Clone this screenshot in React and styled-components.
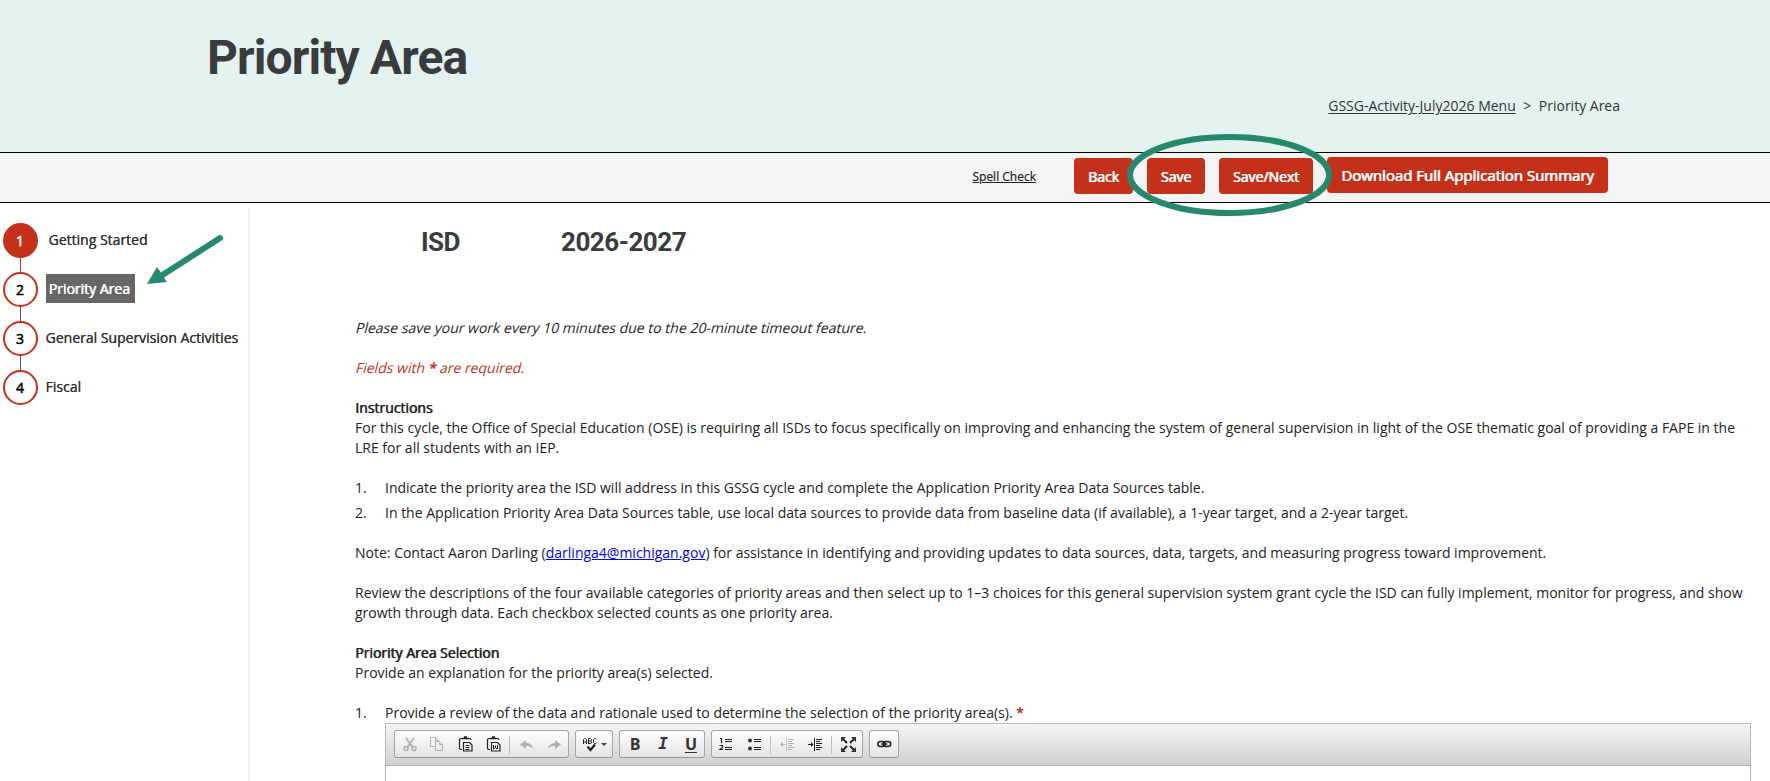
import React from 'react';
import styled, { createGlobalStyle } from 'styled-components';

//Styles
const GlobalStyle = createGlobalStyle`
  * {
    box-sizing: border-box;
  }
  body {
    margin: 0;
    background: #fff;
    color: #222;
    font-family: 'Open Sans', sans-serif;
    font-size: 14px;
    line-height: 20px;
  }
`;

const Page = styled.div`
  position: relative;
  height: 781px;
  overflow: hidden;
`;

const Header = styled.header`
  height: 152px;
  padding: 28px 150px 0 207px;
  background: #e4f3f0;
`;

const Title = styled.h1`
  margin: 0;
  height: 68px;
  color: #3a3b3d;
  font-family: Roboto, sans-serif;
  font-size: 48px;
  font-weight: 700;
  line-height: 60px;
  letter-spacing: -0.9px;
`;

const Breadcrumb = styled.nav`
  display: flex;
  justify-content: flex-end;
  gap: 7.5px;
  color: #333;
`;

const BreadcrumbLink = styled.a`
  text-decoration: underline;
  text-underline-offset: 2px;
`;

const ActionBar = styled.div`
  display: flex;
  align-items: flex-start;
  justify-content: flex-end;
  gap: 14px;
  height: 51px;
  padding: 5px 162px 0 0;
  background: #f4f4f4;
  border-top: 1px solid #000;
  border-bottom: 1px solid #000;
`;

const SpellCheck = styled.a`
  margin: 9px 24px 0 0;
  font-size: 12px;
  text-decoration: underline;
  -webkit-text-stroke: 0.2px;
`;

const Button = styled.button`
  width: ${({ $width }) => $width}px;
  height: 36px;
  margin: ${({ $large }) => ($large ? '-1px 0 0' : '0')};
  padding: 0;
  border: 0;
  border-radius: 4px;
  background: #c4311b;
  color: #fff;
  font-family: inherit;
  font-size: ${({ $large }) => ($large ? 15 : 14)}px;
  line-height: 37px;
  white-space: nowrap;
  text-shadow: 0.7px 0 currentColor;
  -webkit-text-stroke: 0.2px;
`;

const Body = styled.div`
  display: flex;
  padding-top: 6px;
`;

const Sidebar = styled.ol`
  display: flex;
  flex-direction: column;
  width: 250px;
  height: 580px;
  margin: 0;
  padding: 14px 0 0 3px;
  border-right: 2px solid #f1f1f1;
  list-style: none;
`;

const Step = styled.li`
  display: grid;
  grid-template-columns: 35px 1fr;
  grid-template-rows: 35px 14px;
  column-gap: 8px;
`;

const StepNumber = styled.span`
  height: 35px;
  padding-right: 1px;
  border: 2px solid #c4311b;
  border-radius: 50%;
  background: ${({ $filled }) => ($filled ? '#c4311b' : '#fff')};
  color: ${({ $filled }) => ($filled ? '#fff' : '#000')};
  line-height: 31px;
  text-align: center;
  -webkit-text-stroke: 0.5px;
`;

const StepLabel = styled.span`
  justify-self: start;
  height: 29px;
  margin-top: 2px;
  padding: 0 ${({ $current }) => ($current ? '5px' : '0')} 0
    ${({ $inset }) => ($inset ? '3px' : '0')};
  background: ${({ $current }) => ($current ? '#666' : 'transparent')};
  color: ${({ $current }) => ($current ? '#fff' : '#333')};
  line-height: 30px;
  text-indent: -0.5px;
  white-space: nowrap;
  text-shadow: ${({ $current }) => ($current ? '0.7px' : '0.3px')} 0 currentColor;
`;

const StepLine = styled.span`
  justify-self: center;
  width: 1px;
  height: 14px;
  background: ${({ $done }) => ($done ? '#c4311b' : '#555')};
`;

const Content = styled.main`
  flex: 1;
  padding: 16px 19px 0 105px;
`;

const Applicant = styled.h2`
  display: flex;
  gap: 101px;
  margin: 0 0 59px 66px;
  color: #3a3b3d;
  font-family: Roboto, sans-serif;
  font-size: 26px;
  font-weight: 700;
  line-height: 34px;
  letter-spacing: -0.5px;
`;

const Paragraph = styled.p`
  margin: 0 0 20px;
`;

//Slanted upright face, wider than the true italic
const Slanted = styled(Paragraph)`
  color: ${({ $red }) => ($red ? '#c4311b' : 'inherit')};
  transform: skewX(-14deg);
  transform-origin: 0 75%;
`;

const Strong = styled.span`
  display: block;
  text-shadow: 0.7px 0 currentColor;
`;

const Required = styled.b`
  color: #c4311b;
`;

const MailLink = styled.a`
  color: #0000ee;
  text-decoration: underline;
`;

const List = styled.ol`
  display: flex;
  flex-direction: column;
  gap: 5px;
  margin: 0 0 20px;
  padding: 0;
  list-style: none;
`;

const Item = styled.li`
  display: grid;
  grid-template-columns: 30px 1fr;
`;

const Editor = styled.div`
  height: 120px;
  margin-left: 30px;
  border: 1px solid #b6b6b6;
`;

const Toolbar = styled.div`
  display: flex;
  gap: 6px;
  height: 42px;
  padding: 6px 8px;
  background: linear-gradient(#f5f5f5, #cfd1cf);
  border-bottom: 1px solid #b6b6b6;
  box-shadow: inset 0 1px 0 #fff;
`;

const Group = styled.div`
  display: flex;
  height: 28px;
  border: 1px solid #a6a6a6;
  border-bottom-color: #979797;
  border-radius: 3px;
  background: linear-gradient(#fff, #e4e4e4);
`;

const Tool = styled.span`
  display: flex;
  align-items: center;
  padding: 0 5px 0 7px;
  opacity: ${({ $disabled }) => ($disabled ? 0.3 : 1)};
`;

const Separator = styled.span`
  width: 1px;
  height: 18px;
  margin: 5px 2px 0;
  background: #c0c0c0;
`;

const Caret = styled.span`
  width: 0;
  height: 0;
  margin: 12px 5px 0 -3px;
  border: 3px solid transparent;
  border-top: 3px solid #474747;
  border-bottom: 0;
`;

const Glyph = styled.svg`
  display: block;
  width: 16px;
  height: 16px;
  overflow: visible;
  fill: none;
  stroke: #222;
`;

const Letter = styled.span`
  width: 16px;
  color: #333;
  font: ${({ $italic }) => ($italic ? 'italic' : 'normal')} bold 16px/16px
    ${({ $italic }) => ($italic ? "'DejaVu Sans Mono', monospace" : "'Open Sans', sans-serif")};
  text-align: center;
  text-decoration: ${({ $underline }) => ($underline ? 'underline' : 'none')};
  text-decoration-thickness: 1px;
  text-underline-offset: 2px;
`;

const Annotations = styled.svg`
  position: absolute;
  top: 0;
  left: 0;
  width: 1770px;
  height: 781px;
  pointer-events: none;
`;

//Toolbar icons
const clipboard = (
  <>
    <path
      d="M4 13.5H3A1.5 1.5 0 0 1 1.5 12V4A1.5 1.5 0 0 1 3 2.5h1.5M10.500 2.5h1A1.5 1.5 0 0 1 13 4"
      strokeWidth="1.2"
    />
    <path d="M4 2.500h7M6 1h3" strokeWidth="1.5" />
    <path d="M5.500 6.500h6l2.500 2.500v6H5.500z" strokeWidth="1.2" />
  </>
);

const icons = {
  cut: (
    <>
      <path d="M4 2 10.5 11M12 2 5.5 11" strokeWidth="2" />
      <circle cx="4" cy="12.5" r="2" strokeWidth="1.5" />
      <circle cx="12" cy="12.5" r="2" strokeWidth="1.5" />
    </>
  ),
  copy: (
    <path d="M4.500 10.500h-4v-9h5l3 3v1M5.500 1.500v3h3M5.500 5.500h4l3 3v6h-7zM9.500 5.500v3h3" />
  ),
  paste: (
    <>
      {clipboard}
      <path d="M7.500 9.500h4M7.500 11.500h4M7.500 13.500h4" />
    </>
  ),
  pasteWord: (
    <>
      {clipboard}
      <path d="M7.500 9v4l2-1.500 2 1.500V9M9.500 9.500v2" />
    </>
  ),
  undo: (
    <path d="M1 8.500 7 4v3c4 0 6 2 7.500 6C12 10.500 10 10 7 10v3z" fill="#222" stroke="none" />
  ),
  redo: (
    <path d="M14 8.500 8 4v3c-4 0-6 2-7.500 6C3 10.500 5 10 8 10v3z" fill="#222" stroke="none" />
  ),
  spell: (
    <>
      <path d="M.5 8V3.500l1-1h1l1 1V8M.5 6h3M5.500 8V2.500h2l1 1v1l-1 .5h-2M7.500 5l1 1v1l-1 .5h-2M13.500 3.500l-1-1h-1l-1 1v3l1 1h1l1-1" />
      <path d="m4.500 10.500 3 3.500L12 8.500" strokeWidth="2.2" />
    </>
  ),
  numbered: (
    <>
      <path d="M6 3.500h7M6 5.500h7M6 11.500h7M6 13.500h7" />
      <path d="M1 2.500h1.500V7M.5 9.500h3v2l-2.500 2h3" strokeWidth="1.2" />
    </>
  ),
  bullets: (
    <>
      <circle cx="3" cy="4.5" r="2" fill="#333" stroke="none" />
      <circle cx="3" cy="12.5" r="2" fill="#333" stroke="none" />
      <path d="M7 3.500h7M7 5.500h7M7 11.500h7M7 13.500h7" />
    </>
  ),
  outdent: (
    <>
      <path d="M6.500 2v13" strokeDasharray="1.5 0.5" />
      <path d="M8 3.500h6M8 5.500h4M8 7.500h6M8 9.500h4M8 11.500h6M8 13.500h4M1 8.500h4" />
      <path d="M3 6v5L0 8.500z" fill="#222" stroke="none" />
    </>
  ),
  indent: (
    <>
      <path d="M6.500 2v13" />
      <path d="M8 3.500h6M8 5.500h4M8 7.500h6M8 9.500h4M8 11.500h6M8 13.500h4M0 8.500h4" />
      <path d="M3 6v5l2.500-2.500z" fill="#222" stroke="none" />
    </>
  ),
  maximize: (
    <>
      <path d="M2 3l4 4M13 3l-4 4M2 14l4-4M13 14l-4-4" strokeWidth="2" />
      <path d="M0 1h5L0 6zM15 1h-5l5 5zM0 16h5l-5-5zM15 16h-5l5-5z" fill="#333" stroke="none" />
    </>
  ),
  link: (
    <>
      <rect x=".8" y="5.5" width="7.5" height="5" rx="2.5" strokeWidth="1.5" />
      <rect x="6.2" y="5.5" width="7.5" height="5" rx="2.5" strokeWidth="1.5" />
      <path d="M4 8h6.500" strokeWidth="1.3" />
    </>
  ),
};

const steps = [
  { id: 1, label: 'Getting Started', filled: true, inset: true },
  { id: 2, label: 'Priority Area', current: true, inset: true },
  { id: 3, label: 'General Supervision Activities' },
  { id: 4, label: 'Fiscal' },
];

//Components
function Icon({ name, disabled }) {
  return (
    <Tool $disabled={disabled}>
      <Glyph viewBox="0 0 16 16">{icons[name]}</Glyph>
    </Tool>
  );
}

function EditorToolbar() {
  return (
    <Toolbar>
      <Group>
        <Icon name="cut" disabled />
        <Icon name="copy" disabled />
        <Icon name="paste" />
        <Icon name="pasteWord" />
        <Separator />
        <Icon name="undo" disabled />
        <Icon name="redo" disabled />
      </Group>
      <Group>
        <Icon name="spell" />
        <Caret />
      </Group>
      <Group>
        <Tool>
          <Letter>B</Letter>
        </Tool>
        <Tool>
          <Letter $italic>I</Letter>
        </Tool>
        <Tool>
          <Letter $underline>U</Letter>
        </Tool>
      </Group>
      <Group>
        <Icon name="numbered" />
        <Icon name="bullets" />
        <Separator />
        <Icon name="outdent" disabled />
        <Icon name="indent" />
        <Separator />
        <Icon name="maximize" />
      </Group>
      <Group>
        <Icon name="link" />
      </Group>
    </Toolbar>
  );
}

function StepList() {
  return (
    <Sidebar>
      {steps.map(({ id, label, filled, current, inset }) => (
        <Step key={id}>
          <StepNumber $filled={filled}>{id}</StepNumber>
          <StepLabel $current={current} $inset={inset}>
            {label}
          </StepLabel>
          {id < steps.length && <StepLine $done={filled} />}
        </Step>
      ))}
    </Sidebar>
  );
}

export default function App() {
  return (
    <Page>
      <GlobalStyle />
      <Header>
        <Title>Priority Area</Title>
        <Breadcrumb>
          <BreadcrumbLink>GSSG-Activity-July2026 Menu</BreadcrumbLink>
          <span>&gt;</span>
          <span>Priority Area</span>
        </Breadcrumb>
      </Header>
      <ActionBar>
        <SpellCheck>Spell Check</SpellCheck>
        <Button $width={59}>Back</Button>
        <Button $width={58}>Save</Button>
        <Button $width={94}>Save/Next</Button>
        <Button $width={281} $large>
          Download Full Application Summary
        </Button>
      </ActionBar>
      <Body>
        <StepList />
        <Content>
          <Applicant>
            <span>ISD</span>
            <span>2026-2027</span>
          </Applicant>
          <Slanted>
            Please save your work every 10 minutes due to the 20-minute timeout feature.
          </Slanted>
          <Slanted $red>
            Fields with <Required>*</Required> are required.
          </Slanted>
          <Paragraph>
            <Strong>Instructions</Strong>
            For this cycle, the Office of Special Education (OSE) is requiring all ISDs to focus
            specifically on improving and enhancing the system of general supervision in light of
            the OSE thematic goal of providing a FAPE in the LRE for all students with an IEP.
          </Paragraph>
          <List>
            <Item>
              <span>1.</span>
              <span>
                Indicate the priority area the ISD will address in this GSSG cycle and complete the
                Application Priority Area Data Sources table.
              </span>
            </Item>
            <Item>
              <span>2.</span>
              <span>
                In the Application Priority Area Data Sources table, use local data sources to
                provide data from baseline data (if available), a 1-year target, and a 2-year
                target.
              </span>
            </Item>
          </List>
          <Paragraph>
            Note: Contact Aaron Darling (<MailLink>darlinga4@michigan.gov</MailLink>) for assistance
            in identifying and providing updates to data sources, data, targets, and measuring
            progress toward improvement.
          </Paragraph>
          <Paragraph>
            Review the descriptions of the four available categories of priority areas and then
            select up to 1–3 choices for this general supervision system grant cycle the ISD can
            fully implement, monitor for progress, and show growth through data. Each checkbox
            selected counts as one priority area.
          </Paragraph>
          <Paragraph>
            <Strong>Priority Area Selection</Strong>
            Provide an explanation for the priority area(s) selected.
          </Paragraph>
          <Item as="div">
            <span>1.</span>
            <span>
              Provide a review of the data and rationale used to determine the selection of the
              priority area(s). <Required>*</Required>
            </span>
          </Item>
          <Editor>
            <EditorToolbar />
          </Editor>
        </Content>
      </Body>
      <Annotations viewBox="0 0 1770 781">
        <ellipse cx="1229.5" cy="175" rx="99.5" ry="38" fill="none" stroke="#25886f" strokeWidth="6" />
        <path d="M220 238 161 276" stroke="#25886f" strokeWidth="6" strokeLinecap="round" />
        <path d="M147 284 157 267 167 282z" fill="#25886f" />
      </Annotations>
    </Page>
  );
}
